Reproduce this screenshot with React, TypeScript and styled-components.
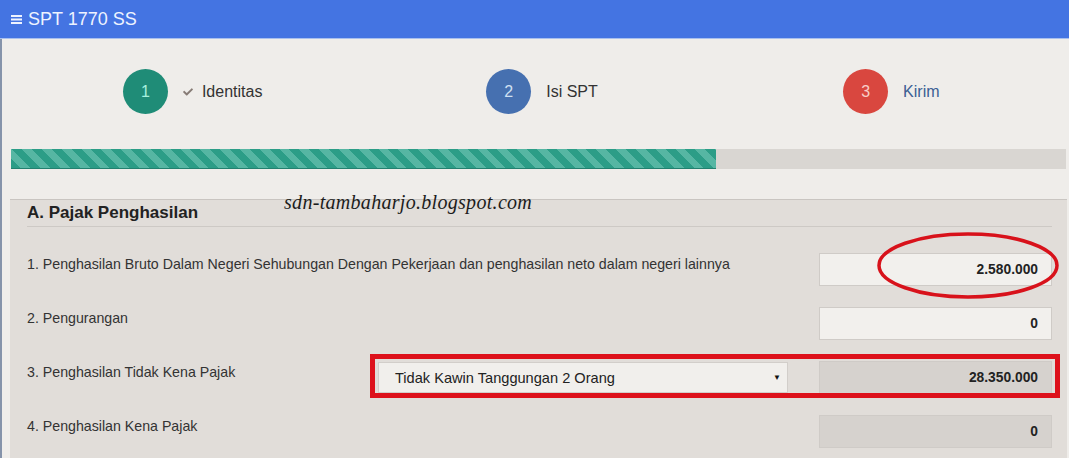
import React from 'react';
import styled, { createGlobalStyle } from 'styled-components';
import { FaCheck } from 'react-icons/fa';

const GlobalStyle = createGlobalStyle`
  html, body {
    margin: 0;
    padding: 0;
    background: #efedea;
  }
  body {
    font-family: "Liberation Sans", Arial, sans-serif;
    color: #333;
  }
`;

const steps = [
  { no: 1, label: 'Identitas', bg: '#1f8c77', fg: '#a6f0de', done: true, color: '#333' },
  { no: 2, label: 'Isi SPT', bg: '#4670b0', fg: '#cfe0f2', done: false, color: '#333' },
  { no: 3, label: 'Kirim', bg: '#d9473f', fg: '#f7cfc8', done: false, color: '#3b5f94' },
];

const fields = [
  { label: '1. Penghasilan Bruto Dalam Negeri Sehubungan Dengan Pekerjaan dan penghasilan neto dalam negeri lainnya', value: '2.580.000', readOnly: false },
  { label: '2. Pengurangan', value: '0', readOnly: false },
  { label: '3. Penghasilan Tidak Kena Pajak', value: '28.350.000', readOnly: true, select: 'Tidak Kawin Tanggungan 2 Orang' },
  { label: '4. Penghasilan Kena Pajak', value: '0', readOnly: true },
];

const Frame = styled.div`
  position: relative;
  width: 1069px;
  height: 458px;
  overflow: hidden;
  display: flex;
  flex-direction: column;
  background: #efedea;
`;

const Header = styled.header`
  height: 38px;
  flex: none;
  display: flex;
  align-items: center;
  gap: 6px;
  padding-left: 11px;
  background: #4474e2;
  border-bottom: 1px solid #a9c0ee;
  color: #eef3ff;
  font-size: 18px;
`;

const Body = styled.main`
  flex: 1;
  display: flex;
  flex-direction: column;
  border-left: 2px solid #8593aa;
  padding: 0 3px 0 9px;
`;

const Steps = styled.div`
  display: grid;
  grid-template-columns: repeat(3, 1fr);
  padding: 30px 0 35px 7px;
`;

const Step = styled.div`
  display: flex;
  align-items: center;
  justify-content: center;
  gap: 15px;
`;

const Bubble = styled.div<{ $bg: string; $fg: string }>`
  width: 45px;
  height: 45px;
  border-radius: 50%;
  display: flex;
  align-items: center;
  justify-content: center;
  background: ${(p) => p.$bg};
  color: ${(p) => p.$fg};
  font-size: 16px;
`;

const StepLabel = styled.span<{ $color: string }>`
  display: flex;
  align-items: center;
  gap: 9px;
  font-size: 16px;
  color: ${(p) => p.$color};
`;

const Progress = styled.div`
  height: 20px;
  background: #d9d6d2;
  display: flex;
`;

const ProgressFill = styled.div`
  height: 100%;
  box-sizing: border-box;
  border-bottom: 1px solid #23806f;
  background: repeating-linear-gradient(
    45deg,
    #2c9d87 0,
    #2c9d87 7px,
    #56b6a3 7px,
    #56b6a3 14px
  );
`;

const Panel = styled.section`
  margin: 30px -1px 0;
  flex: 1;
  background: #e1ddd9;
  border-top: 1px solid #c9c5c1;
  padding: 0 15px 0 17px;
`;

const Heading = styled.h2`
  margin: 0;
  font-size: 17px;
  font-weight: bold;
  line-height: 26px;
  color: #222;
  border-bottom: 1px solid #cdc9c5;
`;

const FieldList = styled.div`
  display: flex;
  flex-direction: column;
  gap: 21px;
  padding-top: 26px;
`;

const Row = styled.div`
  display: grid;
  grid-template-columns: 1fr 410px 233px;
  column-gap: 31px;
  align-items: start;
`;

const Label = styled.div<{ $wide: boolean }>`
  grid-column: ${(p) => (p.$wide ? 'span 2' : 'auto')};
  font-size: 14.2px;
  line-height: 16px;
  padding-top: 3px;
  color: #333;
  white-space: nowrap;
`;

const SelectBox = styled.div`
  margin-top: 1px;
  height: 31px;
  box-sizing: border-box;
  display: flex;
  align-items: center;
  justify-content: space-between;
  padding: 0 6px 0 16px;
  background: #f1efec;
  border: 1px solid #d2ceca;
  font-size: 14.6px;
  color: #222;
`;

const Caret = styled.span`
  font-size: 8px;
  color: #111;
`;

const Amount = styled.div<{ $readOnly: boolean }>`
  grid-column: 3;
  height: 33px;
  box-sizing: border-box;
  display: flex;
  align-items: center;
  justify-content: flex-end;
  padding-right: 13px;
  background: ${(p) => (p.$readOnly ? '#d6d2ce' : '#f2f0ed')};
  border: 1px solid #cfcbc7;
  font-size: 13.8px;
  font-weight: bold;
  color: #222;
`;

const Watermark = styled.div`
  position: absolute;
  left: 284px;
  top: 191px;
  font-family: "Liberation Serif", "Times New Roman", serif;
  font-style: italic;
  font-size: 20px;
  color: #1c1c1c;
  letter-spacing: 0.3px;
`;

const MarkBox = styled.div`
  position: absolute;
  left: 370px;
  top: 354px;
  width: 690px;
  height: 44px;
  box-sizing: border-box;
  border: 5px solid #dd111b;
  pointer-events: none;
`;

const MarkRing = styled.svg`
  position: absolute;
  left: 876px;
  top: 231px;
  pointer-events: none;
`;

export default function App() {
  return (
    <>
      <GlobalStyle />
      <Frame>
        <Header>
          <svg width="11" height="9" viewBox="0 0 11 9">
            <rect x="0" y="0" width="11" height="2" fill="#eef3ff" />
            <rect x="0" y="3.5" width="11" height="2" fill="#eef3ff" />
            <rect x="0" y="7" width="11" height="2" fill="#eef3ff" />
          </svg>
          SPT 1770 SS
        </Header>
        <Body>
          <Steps>
            {steps.map((s) => (
              <Step key={s.no}>
                <Bubble $bg={s.bg} $fg={s.fg}>{s.no}</Bubble>
                <StepLabel $color={s.color}>
                  {s.done && <FaCheck size={10} color="#877c76" />}
                  {s.label}
                </StepLabel>
              </Step>
            ))}
          </Steps>
          <Progress>
            <ProgressFill style={{ width: `${(2 / 3) * 100 + 0.2}%` }} />
          </Progress>
          <Panel>
            <Heading>A. Pajak Penghasilan</Heading>
            <FieldList>
              {fields.map((f) => (
                <Row key={f.label}>
                  <Label $wide={!f.select}>{f.label}</Label>
                  {f.select && (
                    <SelectBox>
                      {f.select}
                      <Caret>▼</Caret>
                    </SelectBox>
                  )}
                  <Amount $readOnly={f.readOnly}>{f.value}</Amount>
                </Row>
              ))}
            </FieldList>
          </Panel>
        </Body>
        <Watermark>sdn-tambaharjo.blogspot.com</Watermark>
        <MarkRing width="184" height="69" viewBox="0 0 184 69">
          <ellipse cx="92" cy="34.5" rx="89" ry="31.5" fill="none" stroke="#d8121b" strokeWidth="3.5" />
        </MarkRing>
        <MarkBox />
      </Frame>
    </>
  );
}
